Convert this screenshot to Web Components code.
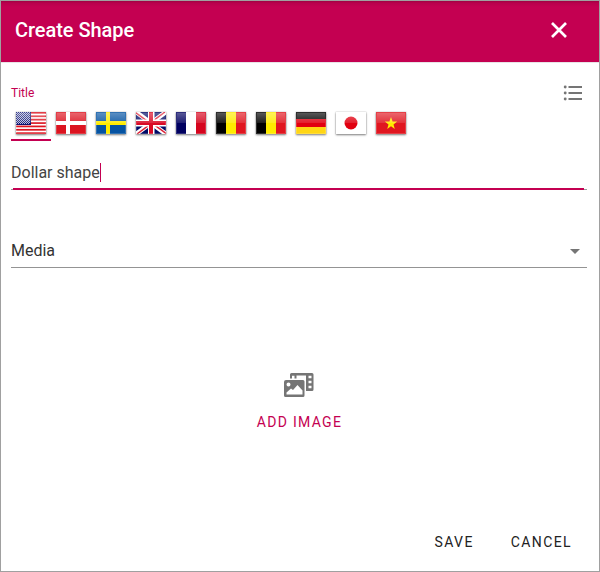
<!DOCTYPE html>
<html lang="en">
<head>
<meta charset="utf-8">
<title>Create Shape</title>
<style>
html, body { margin: 0; height: 100%; overflow: hidden; background: #fff; }
body { font-family: Roboto, "Liberation Sans", sans-serif; color: #333; --accent: #c40051; }
</style>
</head>
<body>
<shape-dialog></shape-dialog>
<script>
const define = (name, html) => {
  const template = document.createElement('template');
  template.innerHTML = html;
  customElements.define(name, class extends HTMLElement {
    constructor() {
      super();
      this.attachShadow({ mode: 'open' }).append(template.content.cloneNode(true));
    }
  });
};

define('dialog-header', `
<style>
:host { display: flex; justify-content: space-between; align-items: center; box-sizing: border-box; height: 62px; padding: 0 30px 3px 14px; color: #fff; background: linear-gradient(#a00043, #b8004c 2px, #c40051 6px); border-bottom: 1px solid #e8e4e6; }
h1 { margin: 0; font: 500 20px/24px Roboto, sans-serif; letter-spacing: -.05px; }
svg { display: block; }
</style>
<h1><slot></slot></h1>
<svg width="20" height="20" viewBox="0 0 20 20" fill="none" stroke="#fff" stroke-width="2.7"><path d="M3 3l14 14M17 3L3 17"/></svg>`);

const stripes = Array.from({ length: 7 }, (_, i) => `<path fill="#dc1420" d="M0 ${(i * 22 / 6.5).toFixed(2)}h30v1.75H0z"/>`).join('');
let stars = '';
for (let y = 0; y < 6; y++) for (let x = 0; x < 7; x++) stars += `<path fill="#b4b8dc" d="M${x * 2 + 1} ${y * 2}h1v1h-1zM${x * 2} ${y * 2 + 1}h1v1h-1z"/>`;
const cols = (a, b, c) => `<path fill="${a}" d="M0 0h10v22H0z"/><path fill="${b}" d="M10 0h10v22H10z"/><path fill="${c}" d="M20 0h10v22H20z"/>`;
const flags = {
  us: `<path fill="#fff" d="M0 0h30v22H0z"/>${stripes}<path fill="#0c1470" d="M0 0h15v13H0z"/>${stars}`,
  dk: `<path fill="#dc1420" d="M0 0h30v22H0z"/><path fill="#fff" d="M10 0h4v22h-4zM0 9h30v4H0z"/>`,
  se: `<path fill="#0553a2" d="M0 0h30v22H0z"/><path fill="#ffec00" d="M10 0h4v22h-4zM0 9h30v4H0z"/>`,
  gb: `<path fill="#000a66" d="M0 0h30v22H0z"/><path stroke="#fff" stroke-width="4.6" d="M0 0l30 22M30 0L0 22"/><path stroke="#dc2035" stroke-width="1.5" d="M0 .8l15 11M29 0L15 10.4M15 11.6L1 22M15 10.4l15 11"/><path fill="#fff" d="M12 0h6.500v22H12zM0 7.500h30v7H0z"/><path fill="#d90a25" d="M13 0h4v22h-4zM0 9h30v4H0z"/>`,
  fr: cols('#000060', '#fff', '#d5051e'),
  be: cols('#000', '#ffec00', '#e01620'),
  de: `<path d="M0 0h30v7H0z"/><path fill="#e10010" d="M0 7h30v8H0z"/><path fill="#ffd615" d="M0 15h30v7H0z"/>`,
  jp: `<path fill="#fff" d="M0 0h30v22H0z"/><circle cx="15" cy="11" r="6.500" fill="#e10010"/>`,
  vn: `<path fill="#e01620" d="M0 0h30v22H0z"/><path fill="#ffec00" d="M15 5l1.600 4.400 4.600.1-3.700 2.900 1.300 4.500-3.800-2.600-3.800 2.600 1.300-4.500-3.700-2.900 4.600-.1z"/>`
};
customElements.define('flag-tab', class extends HTMLElement {
  connectedCallback() {
    const root = this.attachShadow({ mode: 'open' });
    root.innerHTML = `<style>
:host { display: flex; justify-content: center; box-sizing: border-box; width: 40px; height: 35px; padding-top: 6px; border-bottom: 2px solid transparent; }
:host([selected]) { border-color: var(--accent); }
svg { display: block; width: 30px; height: 22px; box-shadow: 0 0 0 .5px rgba(90,90,90,.14), 0 1px 2px rgba(0,0,0,.5); }
</style><svg viewBox="0 0 30 22"><defs><linearGradient id="shine" x2="0" y2="1"><stop stop-color="#fff" stop-opacity=".34"/><stop offset="1" stop-color="#fff" stop-opacity=".12"/></linearGradient></defs>${flags[this.getAttribute('code')]}<path fill="url(#shine)" d="M1 1h28v10H1z"/><path fill="none" stroke="#fff" stroke-opacity=".18" d="M.5.5h29v21H.5z"/></svg>`;
  }
});

define('list-icon', `
<style>:host, svg { display: block; }</style>
<svg width="20" height="18" viewBox="0 0 20 18" fill="#757575"><path d="M5.500 2H19v2H5.500zM5.500 8H19v2H5.500zM5.500 14H19v2H5.500z"/><circle cx="2.200" cy="3" r="1.450"/><circle cx="2.200" cy="9" r="1.450"/><circle cx="2.200" cy="15" r="1.450"/></svg>`);

define('title-field', `
<style>
:host { display: block; }
.top { display: flex; justify-content: space-between; align-items: center; height: 22px; padding: 0 4px 2px 0; }
label { font-size: 12px; line-height: 16px; color: var(--accent); }
.tabs { display: flex; }
.input { display: flex; align-items: center; height: 32px; padding-top: 15px; font-size: 16px; color: #444; }
.caret { width: 1px; height: 19px; background: var(--accent); }
.line { height: 2px; background: linear-gradient(var(--accent), var(--accent)) 2px 0 / calc(100% - 5px) 2px no-repeat, linear-gradient(#999, #999) 0 1px / 100% 1px no-repeat; }
</style>
<div class="top"><label>Title</label><list-icon></list-icon></div>
<div class="tabs"><slot name="tabs"></slot></div>
<div class="input"><slot></slot><span class="caret"></span></div>
<div class="line"></div>`);

define('select-field', `
<style>
:host { display: flex; align-items: center; justify-content: space-between; box-sizing: border-box; height: 35px; padding-right: 7px; border-bottom: 1px solid #949494; font-size: 16px; color: #333; }
svg { display: block; margin-top: 2px; }
</style>
<slot></slot>
<svg width="10" height="5" viewBox="0 0 10 5"><path fill="#757575" d="M0 0h10L5 5z"/></svg>`);

define('media-picker', `
<style>
:host { display: flex; flex-direction: column; align-items: center; padding-left: 1px; color: var(--accent); font-size: 14px; line-height: 20px; letter-spacing: 1.3px; }
svg { display: block; margin: 0 2px 15px 0; }
</style>
<svg width="30" height="24" viewBox="0 0 30 24"><g fill="#757575" fill-rule="evenodd"><path d="M7.500 0H28Q29.500 0 29.500 1.500v15Q29.500 18 28 18h-6V2.500H12.500v3H6v-4Q6 0 7.500 0zM8 2.700v2.800h2.500V2.700zM24.500 2.700v2.600h3V2.700zM24.500 7.700v2.600h3V7.700zM24.500 12.700v2.600h3v-2.600z"/><path d="M2 7h17q1.500 0 1.500 1.500v14Q20.500 24 19 24H1.500Q0 24 0 22.500V9q0-2 2-2zM6.500 11.500a2 2 0 1 0-4 0 2 2 0 1 0 4 0zM2.500 21.500h16v-4L13.500 12 9 17l-2-1.500-4.500 4z"/></g></svg>
<slot></slot>`);

define('text-button', `
<style>:host { display: block; font-size: 14px; line-height: 20px; letter-spacing: 1.4px; color: #222; }</style>
<slot></slot>`);

define('shape-dialog', `
<style>
:host { display: flex; flex-direction: column; box-sizing: border-box; width: 600px; height: 572px; border: 1px solid #a0a0a0; background: #fff; }
main { display: flex; flex-direction: column; flex: 1; padding: 19px 12px 0 10px; }
select-field { margin-top: 43px; }
media-picker { margin-top: 105px; }
footer { display: flex; justify-content: flex-end; gap: 37px; padding: 0 27px 19px 0; }
</style>
<dialog-header>Create Shape</dialog-header>
<main>
  <title-field>
    ${['us', 'dk', 'se', 'gb', 'fr', 'be', 'be', 'de', 'jp', 'vn'].map((code, i) => `<flag-tab slot="tabs" code="${code}"${i ? '' : ' selected'}></flag-tab>`).join('')}Dollar shape</title-field>
  <select-field>Media</select-field>
  <media-picker>ADD IMAGE</media-picker>
</main>
<footer><text-button>SAVE</text-button><text-button>CANCEL</text-button></footer>
`);
</script>
</body>
</html>
